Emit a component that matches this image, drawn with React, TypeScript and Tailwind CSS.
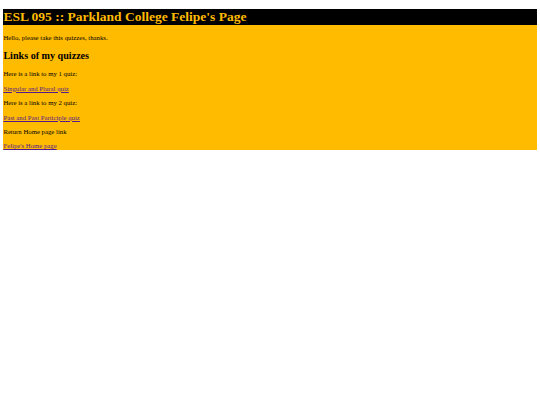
export default function App() {
  const serif = { fontFamily: '"Liberation Serif", "Times New Roman", serif' };
  return (
    <div className="px-[3.375px] pt-[9px] bg-white min-h-[405px]" style={serif}>
      <div className="bg-[#ffbb00] text-black">
        <h1 className="bg-black text-[#ffbb00] text-[13.5px] font-bold leading-[15.5px] mb-[9px]">
          ESL 095 :: Parkland College Felipe's Page
        </h1>
        <p className="text-[6.75px] leading-[7.65px] mb-[6.75px]">Hello, please take this quizzes, thanks.</p>
        <h2 className="text-[10.125px] font-bold leading-[12px] my-[8.6px]">Links of my quizzes</h2>
        <p className="text-[6.75px] leading-[7.65px] my-[6.75px]">Here is a link to my 1 quiz:</p>
        <p className="text-[6.75px] leading-[7.65px] my-[6.75px]">
          <a href="#" className="text-[#551a8b] underline">Singular and Plural quiz</a>
        </p>
        <p className="text-[6.75px] leading-[7.65px] my-[6.75px]">Here is a link to my 2 quiz:</p>
        <p className="text-[6.75px] leading-[7.65px] my-[6.75px]">
          <a href="#" className="text-[#551a8b] underline">Past and Past Participle quiz</a>
        </p>
        <p className="text-[6.75px] leading-[7.65px] my-[6.75px]">Return Home page link</p>
        <p className="text-[6.75px] leading-[7.65px] mt-[6.75px]">
          <a href="#" className="text-[#551a8b] underline">Felipe's Home page</a>
        </p>
      </div>
    </div>
  );
}
